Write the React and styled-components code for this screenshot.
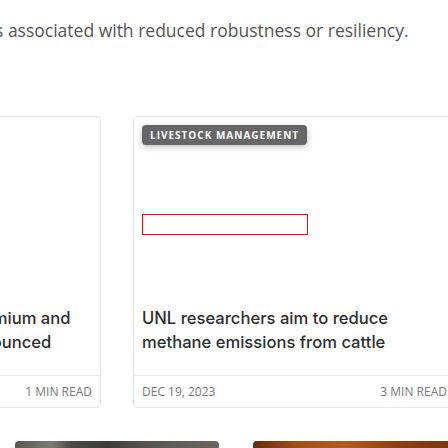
import React from 'react'
import styled, { createGlobalStyle } from 'styled-components'

const GlobalStyle = createGlobalStyle`
  html, body {
    margin: 0;
    padding: 0;
    overflow: hidden;
    background: #fff;
  }
`

const Page = styled.div`
  width: 448px;
  padding-top: 17px;
`

const Lead = styled.p`
  margin: 0 0 0 -5px;
  font-family: 'Open Sans', sans-serif;
  font-size: 17.5px;
  line-height: 27px;
  color: #555;
  white-space: nowrap;
`

const CardGrid = styled.div`
  display: grid;
  grid-template-columns: 323px 323px;
  gap: 32px;
  margin: 72px 0 0 -222px;
`

const Card = styled.article`
  display: flex;
  flex-direction: column;
  border: 1px solid #e6e6e6;
  border-radius: 4px;
  background: #fff;
`

const CardBody = styled.div`
  display: flex;
  flex-direction: column;
  align-items: flex-start;
  padding: 8px 8px 21px;
`

const Tag = styled.span`
  display: inline-block;
  height: 20px;
  line-height: 20px;
  padding: 0 8px;
  min-width: 149px;
  background: #666;
  color: #fff;
  border-radius: 4px;
  font-family: 'Open Sans', sans-serif;
  font-weight: 700;
  font-size: 10px;
  letter-spacing: 1px;
  text-transform: uppercase;
  box-shadow: 0 2px 6px rgba(0, 0, 0, 0.25);
`

const Media = styled.div`
  width: 166px;
  height: 21px;
  margin-top: 69px;
  box-sizing: border-box;
  border: 1px solid #f00;
`

const Title = styled.h3`
  margin: 71px 0 0;
  font-family: Inter, 'Noto Sans', sans-serif;
  font-weight: 500;
  font-size: 16.6px;
  line-height: 24px;
  color: #2e2e2e;
  white-space: nowrap;
`

const Footer = styled.div`
  display: flex;
  justify-content: space-between;
  align-items: center;
  height: 31px;
  padding: 0 8px;
  border-top: 1px solid #e8e8e8;
  font-family: 'Open Sans', sans-serif;
  font-size: 12px;
  color: #7a7a7a;
  text-transform: uppercase;
`

const ImageRow = styled.div`
  display: grid;
  grid-template-columns: 204px 204px;
  gap: 34px;
  margin: 33px 0 0 15px;
`

const Thumb = styled.div`
  height: 120px;
  border-radius: 4px 4px 0 0;
  background: ${(p) => p.$bg};
`

const cards = [
  {
    tag: 'Beef Cattle',
    lines: ["Nebraska Cattlemen's premium and", 'scholarship honorees announced'],
    date: 'Dec 20, 2023',
    read: '1 min read',
  },
  {
    tag: 'Livestock Management',
    lines: ['UNL researchers aim to reduce', 'methane emissions from cattle'],
    date: 'Dec 19, 2023',
    read: '3 min read',
  },
]

const thumbs = [
  'linear-gradient(90deg, #5a5650 0%, #7e7b74 18%, #4a4744 28%, #3e3b38 45%, #5f5955 70%, #6b6560 100%)',
  'linear-gradient(90deg, #6a2a0c 0%, #a0501a 22%, #b35c1e 45%, #8e3f14 70%, #7a3510 100%)',
]

export default function App() {
  return (
    <Page>
      <GlobalStyle />
      <Lead>s associated with reduced robustness or resiliency.</Lead>
      <CardGrid>
        {cards.map((c) => (
          <Card key={c.date}>
            <CardBody>
              <Tag>{c.tag}</Tag>
              <Media />
              <Title>
                {c.lines[0]}
                <br />
                {c.lines[1]}
              </Title>
            </CardBody>
            <Footer>
              <span>{c.date}</span>
              <span>{c.read}</span>
            </Footer>
          </Card>
        ))}
      </CardGrid>
      <ImageRow>
        {thumbs.map((bg) => (
          <Thumb key={bg} $bg={bg} />
        ))}
      </ImageRow>
    </Page>
  )
}
